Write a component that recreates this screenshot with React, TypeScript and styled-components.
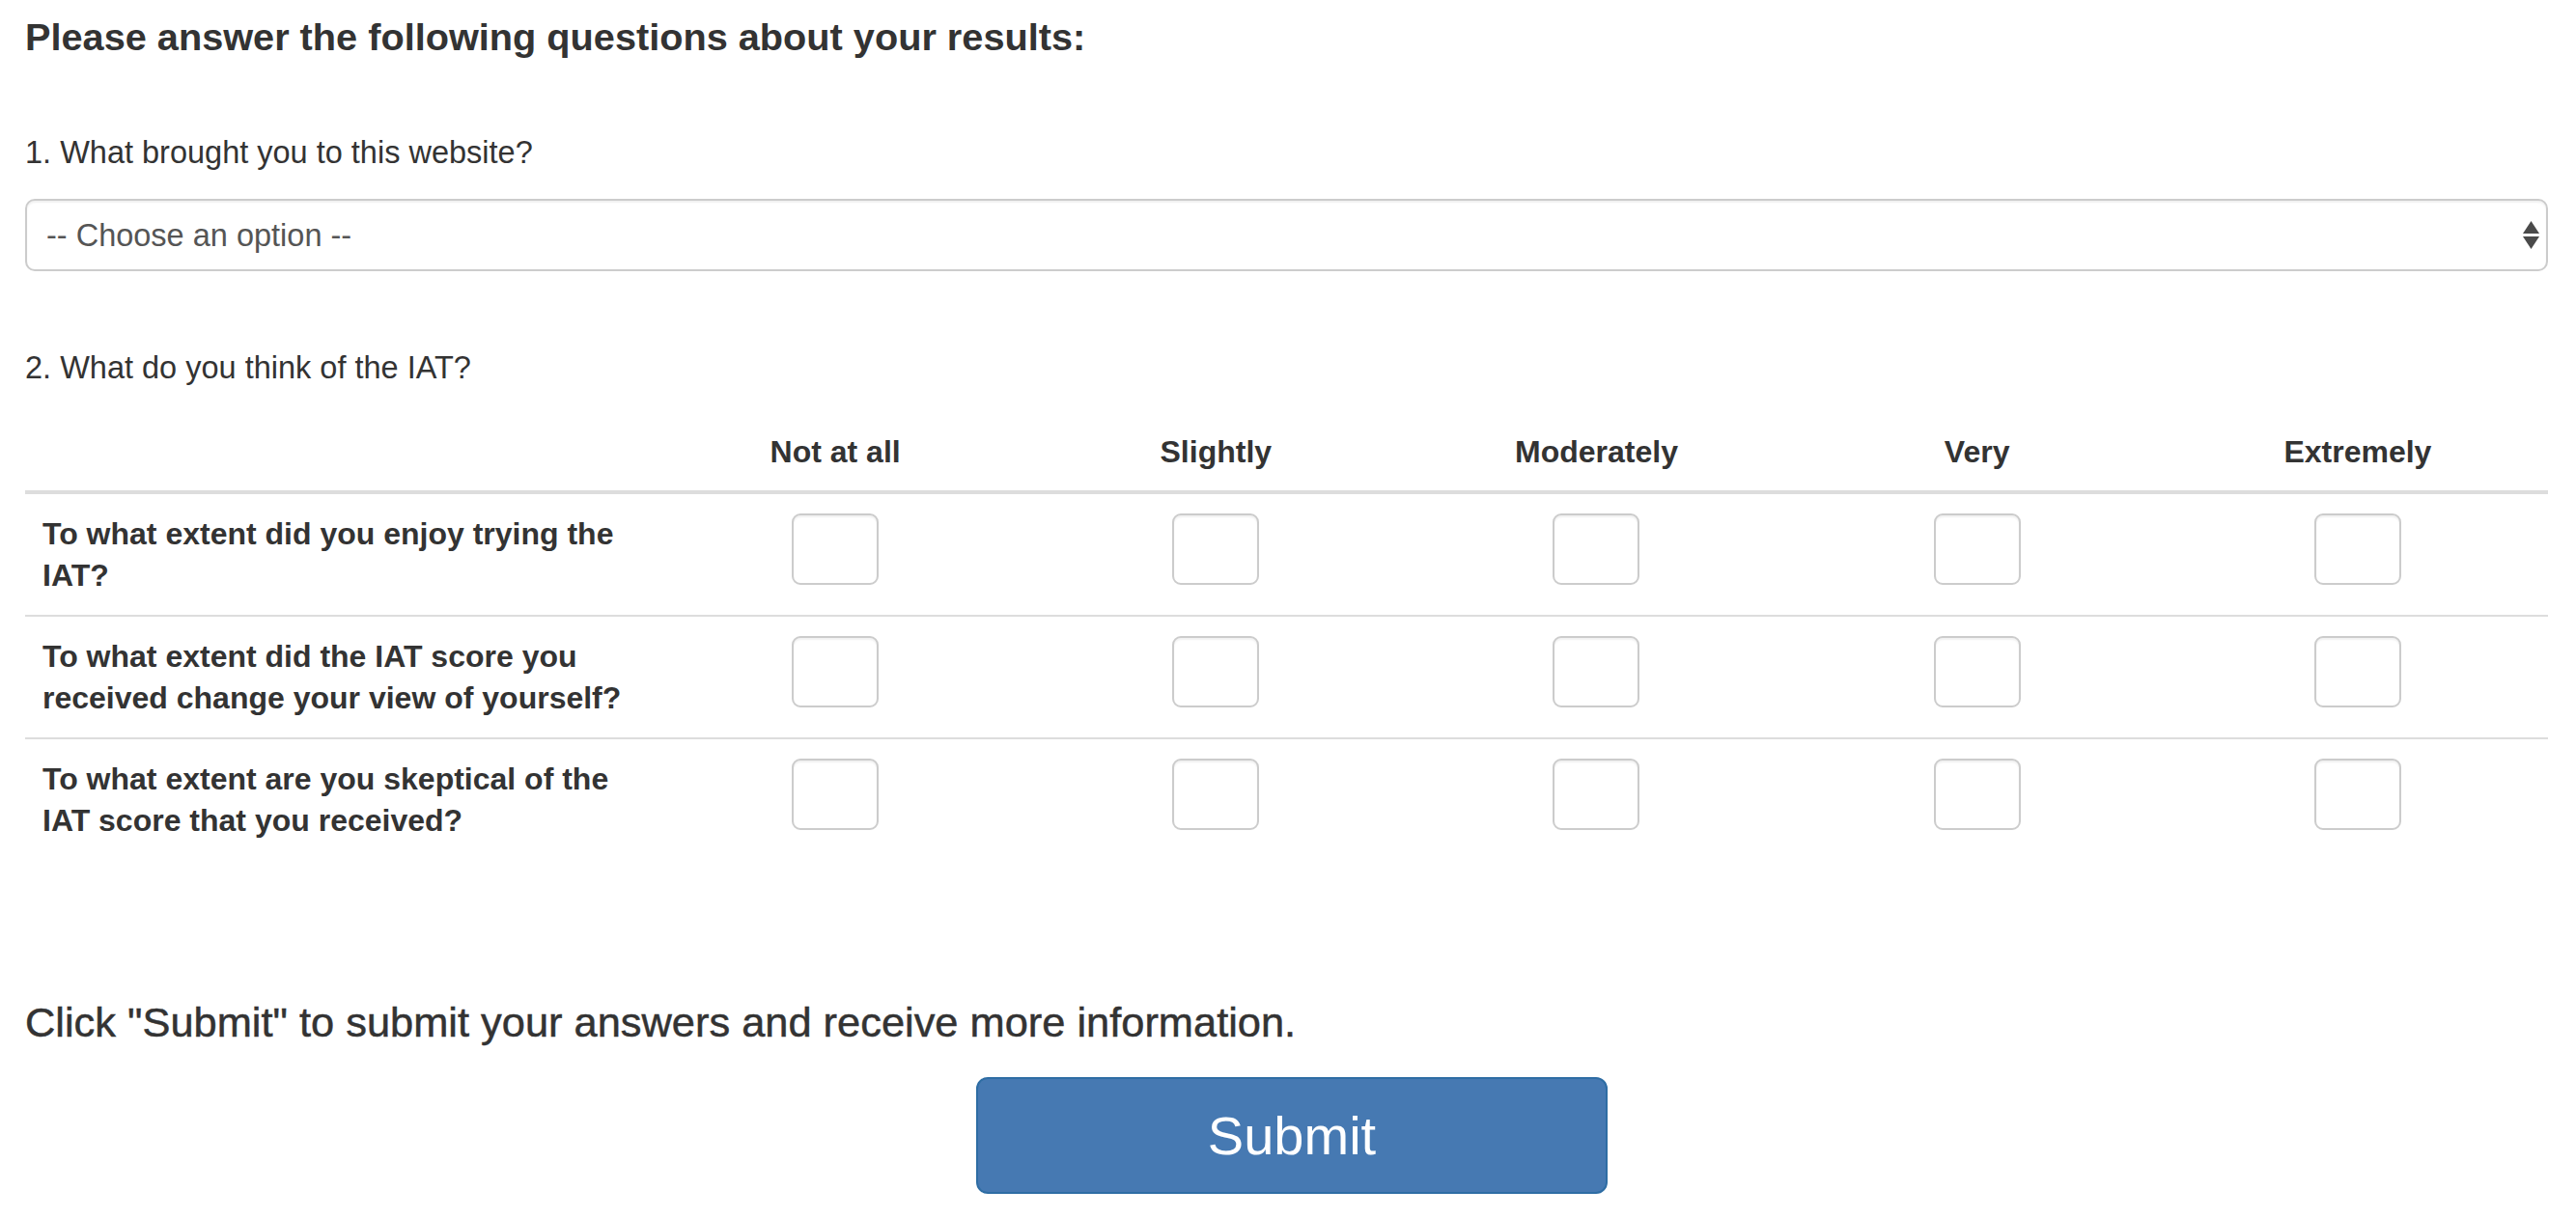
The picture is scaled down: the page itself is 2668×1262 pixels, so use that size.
import React from "react";
import styled, { createGlobalStyle } from "styled-components";

const GlobalStyle = createGlobalStyle`
  html, body {
    margin: 0;
    padding: 0;
    background: #ffffff;
  }
  body {
    font-family: "Liberation Sans", Arial, Helvetica, sans-serif;
    color: #333333;
  }
  * { box-sizing: border-box; }
`;

const Page = styled.main`
  padding: 16px 29px 26px 26px;
  font-family: "Liberation Sans", Arial, Helvetica, sans-serif;
  color: #333333;
`;

const Title = styled.h2`
  margin: 0;
  font-size: 39.7px;
  line-height: 44px;
  font-weight: 700;
`;

const QuestionLabel = styled.p<{ $gap: number }>`
  margin: ${(p) => p.$gap}px 0 0;
  font-size: 32.5px;
  line-height: 46px;
  font-weight: 400;
`;

const SelectWrap = styled.div`
  position: relative;
  margin-top: 25px;
`;

const Select = styled.select`
  display: block;
  width: 100%;
  height: 75px;
  appearance: none;
  -webkit-appearance: none;
  background: #ffffff;
  border: 2px solid #cccccc;
  border-radius: 10px;
  box-shadow: inset 0 2px 2px rgba(0, 0, 0, 0.06);
  padding: 0 20px;
  font-family: "Liberation Sans", Arial, Helvetica, sans-serif;
  font-size: 32.5px;
  color: #555555;
  outline: none;
`;

const Arrows = styled.svg`
  position: absolute;
  right: 9px;
  top: 23px;
  pointer-events: none;
`;

const Table = styled.table`
  margin-top: 23px;
  width: 100%;
  border-collapse: collapse;
  table-layout: fixed;
`;

const HeadCell = styled.th<{ $first?: boolean }>`
  padding: 20px 18px 18px;
  border-bottom: 4px solid #dddddd;
  vertical-align: bottom;
  font-size: 32px;
  line-height: 43px;
  font-weight: 700;
  text-align: ${(p) => (p.$first ? "left" : "center")};
  color: #333333;
`;

const Row = styled.tr<{ $first?: boolean }>`
  border-top: ${(p) => (p.$first ? "0" : "2px solid #dddddd")};
`;

const LabelCell = styled.td`
  padding: 20px 18px 19px;
  vertical-align: top;
  font-size: 32px;
  line-height: 43px;
  font-weight: 700;
  color: #333333;
`;

const BoxCell = styled.td`
  padding: 20px 18px 19px;
  vertical-align: top;
  text-align: center;
`;

const Box = styled.input`
  appearance: none;
  -webkit-appearance: none;
  display: inline-block;
  width: 90px;
  height: 74px;
  margin: 0;
  background: #ffffff;
  border: 2px solid #cccccc;
  border-radius: 9px;
  box-shadow: inset 0 2px 2px rgba(0, 0, 0, 0.06);
  vertical-align: top;
`;

const SubmitNote = styled.p`
  margin: 144px 0 0;
  font-size: 43.4px;
  line-height: 48px;
  font-weight: 400;
  color: #333333;
  -webkit-text-stroke: 0.5px #333333;
`;

const ButtonRow = styled.div`
  display: flex;
  justify-content: center;
  margin-top: 33px;
  padding-left: 11px;
`;

const SubmitButton = styled.button`
  width: 654px;
  height: 121px;
  background: #4679b2;
  border: 2px solid #2e6da4;
  border-radius: 12px;
  color: #ffffff;
  font-family: "Liberation Sans", Arial, Helvetica, sans-serif;
  font-size: 56px;
  line-height: 1;
  cursor: pointer;
`;

const columns = ["Not at all", "Slightly", "Moderately", "Very", "Extremely"];
const rows = [
  "To what extent did you enjoy trying the IAT?",
  "To what extent did the IAT score you received change your view of yourself?",
  "To what extent are you skeptical of the IAT score that you received?",
];

export default function App() {
  return (
    <>
      <GlobalStyle />
      <Page>
        <Title>Please answer the following questions about your results:</Title>

        <QuestionLabel $gap={75}>1. What brought you to this website?</QuestionLabel>
        <SelectWrap>
          <Select defaultValue="">
            <option value="">-- Choose an option --</option>
          </Select>
          <Arrows width="17" height="29" viewBox="0 0 17 29">
            <polygon points="0,13 8.5,0 17,13" fill="#4a4a4a" />
            <polygon points="0,16 17,16 8.5,29" fill="#4a4a4a" />
          </Arrows>
        </SelectWrap>

        <QuestionLabel $gap={77}>2. What do you think of the IAT?</QuestionLabel>
        <Table>
          <colgroup>
            <col style={{ width: "642px" }} />
            {columns.map((c) => (
              <col key={c} />
            ))}
          </colgroup>
          <thead>
            <tr>
              <HeadCell $first />
              {columns.map((c) => (
                <HeadCell key={c}>{c}</HeadCell>
              ))}
            </tr>
          </thead>
          <tbody>
            {rows.map((r, i) => (
              <Row key={r} $first={i === 0}>
                <LabelCell>{r}</LabelCell>
                {columns.map((c) => (
                  <BoxCell key={c}>
                    <Box type="checkbox" aria-label={`${r} ${c}`} />
                  </BoxCell>
                ))}
              </Row>
            ))}
          </tbody>
        </Table>

        <SubmitNote>Click "Submit" to submit your answers and receive more information.</SubmitNote>
        <ButtonRow>
          <SubmitButton type="button">Submit</SubmitButton>
        </ButtonRow>
      </Page>
    </>
  );
}
